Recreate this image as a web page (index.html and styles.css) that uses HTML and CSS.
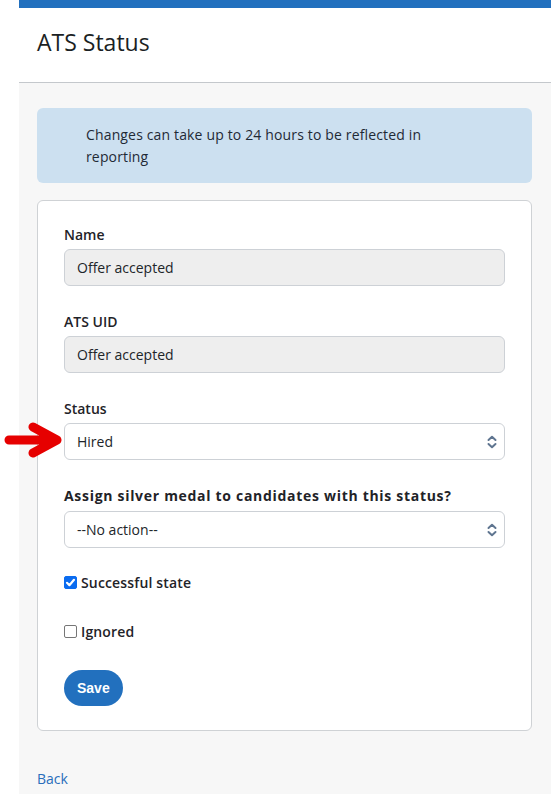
FILE: index.html
```html
<!DOCTYPE html>
<html>
<head>
<meta charset="utf-8">
<link rel="stylesheet" href="styles.css">
</head>
<body>
<div class="gutter"></div>
<div class="main">
  <div class="topbar"></div>
  <header class="header"><h1 class="title">ATS Status</h1></header>
  <div class="content">
    <div class="alert">Changes can take up to 24 hours to be reflected in reporting</div>
    <div class="card">
      <div class="group">
        <label class="label">Name</label>
        <div class="input readonly">Offer accepted</div>
      </div>
      <div class="group">
        <label class="label">ATS UID</label>
        <div class="input readonly">Offer accepted</div>
      </div>
      <div class="group">
        <label class="label">Status</label>
        <div class="input select">Hired
          <svg class="chev" width="10" height="14" viewBox="0 0 10 14"><path d="M1.5 5 L5 1.8 L8.5 5 M1.5 9 L5 12.2 L8.5 9" fill="none" stroke="#5f7590" stroke-width="2" stroke-linecap="round" stroke-linejoin="round"/></svg>
        </div>
        <svg class="arrow" width="64" height="40" viewBox="0 0 64 40"><path d="M9 21 H55 M33 8 L57 21 L33 34" fill="none" stroke="#e60000" stroke-width="9" stroke-linecap="round" stroke-linejoin="round"/></svg>
      </div>
      <div class="group medal">
        <label class="label wide">Assign silver medal to candidates with this status?</label>
        <div class="input select">--No action--
          <svg class="chev" width="10" height="14" viewBox="0 0 10 14"><path d="M1.5 5 L5 1.8 L8.5 5 M1.5 9 L5 12.2 L8.5 9" fill="none" stroke="#5f7590" stroke-width="2" stroke-linecap="round" stroke-linejoin="round"/></svg>
        </div>
      </div>
      <div class="check-row first">
        <span class="box checked"><svg width="13" height="13" viewBox="0 0 13 13"><path d="M3 6.8 L5.4 9.2 L10 3.8" fill="none" stroke="#fff" stroke-width="2.2" stroke-linecap="round" stroke-linejoin="round"/></svg></span>
        <span class="check-label">Successful state</span>
      </div>
      <div class="check-row">
        <span class="box"></span>
        <span class="check-label">Ignored</span>
      </div>
      <button class="btn">Save</button>
    </div>
    <a class="back" href="#">Back</a>
  </div>
</div>
</body>
</html>
```
FILE: styles.css
```css
html, body {
  margin: 0;
  padding: 0;
  height: 100%;
}
body {
  display: flex;
  font-family: "Open Sans", "Noto Sans", sans-serif;
  color: #212529;
  background: #fff;
}
.gutter {
  width: 19px;
  flex: none;
  background: #fff;
}
.main {
  flex: 1;
  background: #f7f7f7;
  min-height: 794px;
}
.topbar {
  height: 8px;
  background: #2270be;
}
.header {
  background: #fff;
  height: 74px;
  border-bottom: 1px solid #c4c8cc;
  display: flex;
  align-items: center;
  padding-left: 18px;
}
.title {
  margin: 0;
  font-size: 23px;
  font-weight: 500;
  color: #1b1f24;
  line-height: 30px;
  position: relative;
  top: -3px;
}
.content {
  padding: 25px 19px 0 18px;
}
.alert {
  background: #cce0f0;
  border-radius: 6px;
  padding: 16px 90px 15px 49px;
  font-size: 14px;
  line-height: 22px;
  letter-spacing: 0.15px;
  color: #1f2a36;
}
.card {
  margin-top: 17px;
  background: #fff;
  border: 1px solid #cfd2d5;
  border-radius: 6px;
  padding: 24px 26px 24px 26px;
}
.group {
  margin-bottom: 26px;
  position: relative;
}
.label {
  display: block;
  font-size: 14px;
  font-weight: 600;
  line-height: 20px;
  margin-bottom: 4px;
  color: #1f2328;
}
.label.wide {
  font-weight: 700;
  letter-spacing: 0.7px;
  margin-bottom: 5px;
}
.input {
  box-sizing: border-box;
  height: 37px;
  border: 1px solid #cdd1d6;
  border-radius: 6px;
  padding: 0 12px;
  font-size: 14px;
  line-height: 35px;
  color: #212529;
  background: #fff;
  position: relative;
}
.readonly {
  background: #eeeeee;
}
.arrow {
  position: absolute;
  left: -64px;
  top: 20px;
}
.chev {
  position: absolute;
  right: 7px;
  top: 11px;
}
.group.medal {
  margin-bottom: 24px;
}
.check-row {
  display: flex;
  align-items: center;
  height: 20px;
  margin-bottom: 29px;
}
.box {
  box-sizing: border-box;
  width: 13px;
  height: 13px;
  border: 1px solid #767676;
  border-radius: 2px;
  margin-right: 4px;
  display: flex;
  background: #fff;
}
.box.checked {
  background: #0b6cf0;
  border-color: #0b6cf0;
}
.box.checked svg {
  margin: -1px;
}
.check-label {
  font-size: 14px;
  font-weight: 600;
  letter-spacing: 0.15px;
  color: #1f2328;
}
.btn {
  display: block;
  height: 36px;
  padding: 0 13px;
  border: none;
  border-radius: 18px;
  background: #2270be;
  color: #fff;
  font-family: "Liberation Sans", Arial, sans-serif;
  font-weight: 700;
  font-size: 14px;
}
.back {
  display: inline-block;
  margin-top: 38px;
  font-size: 14px;
  line-height: 20px;
  color: #2a6ebb;
  text-decoration: none;
}
```
